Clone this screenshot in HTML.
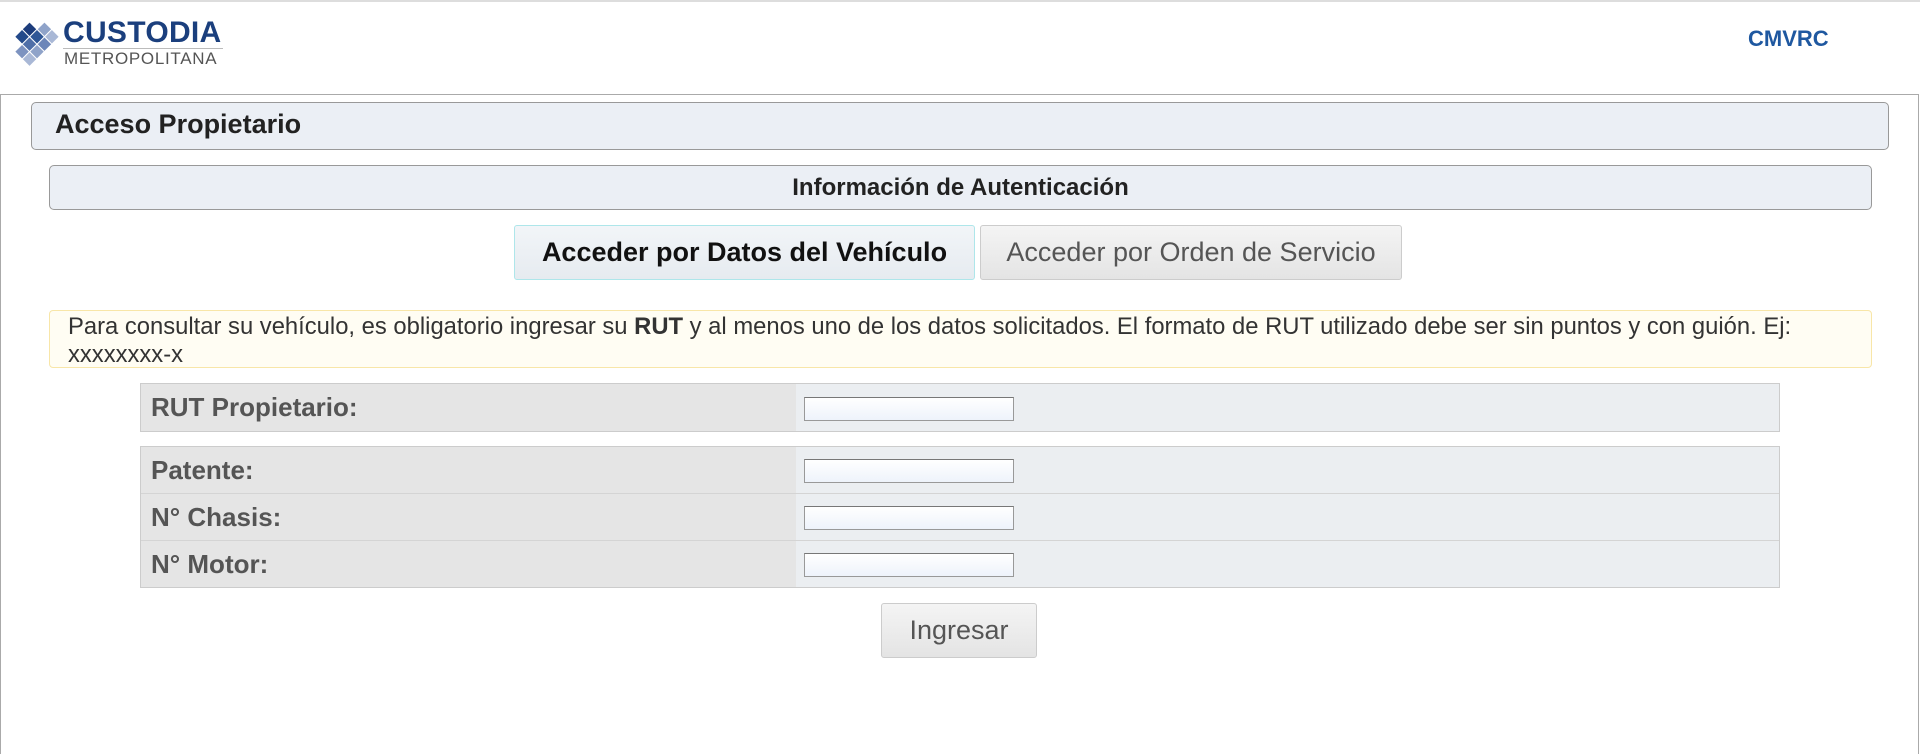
<!DOCTYPE html>
<html><head><meta charset="utf-8"><style>
*{box-sizing:border-box;margin:0;padding:0}
body{width:1920px;height:732px;background:#fff;font-family:"Liberation Sans",Arial,sans-serif;position:relative;overflow:hidden}
.a{position:absolute}
.topline{left:0;top:0;width:1920px;height:2px;background:#ddd}
.outer{left:0;top:94px;width:1919px;height:660px;border:1px solid #aaa;border-bottom:none}
.panel{background:#ebeff5;border:1px solid #999;border-radius:5px}
.tab{border:1px solid #ccc;border-radius:3px;background:linear-gradient(#f4f4f4,#e4e4e4);font-size:27px;text-align:center;line-height:52px;white-space:nowrap}
.lbl{background:#e5e5e5;color:#555;font-weight:bold;font-size:26px;padding-left:10px}
.inp{left:804px;width:210px;height:24px;border:1px solid #999;border-top-color:#777;background:linear-gradient(#fff,#eef3fb)}
</style></head><body>
<div class="a topline"></div>
<svg class="a" style="left:8px;top:15px" width="52" height="58" viewBox="0 0 40 55">
<g transform="rotate(45 20 27)">
<rect x="13" y="6" width="9" height="9" fill="#8fa3c9"/><rect x="23" y="6" width="9" height="9" fill="#a9b8d6"/>
<rect x="3" y="16" width="9" height="9" fill="#1d3d7c"/><rect x="13" y="16" width="9" height="9" fill="#2e5696"/><rect x="23" y="16" width="9" height="9" fill="#6c86b9"/>
<rect x="3" y="26" width="9" height="9" fill="#234a8a"/><rect x="13" y="26" width="9" height="9" fill="#4f6fa8"/><rect x="23" y="26" width="9" height="9" fill="#8fa3c9"/>
<rect x="13" y="36" width="9" height="9" fill="#7d93c0"/><rect x="23" y="36" width="9" height="9" fill="#a9b8d6"/>
</g></svg>
<div class="a" style="left:63px;top:16px;font-size:30px;font-weight:bold;color:#1b3f7d;letter-spacing:0.3px">CUSTODIA</div>
<div class="a" style="left:63px;top:48px;width:160px;height:1px;background:#bbb"></div>
<div class="a" style="left:64px;top:49px;font-size:17px;color:#555;letter-spacing:0.7px">METROPOLITANA</div>
<div class="a" style="left:1748px;top:26px;font-size:22px;font-weight:bold;color:#1f58a0">CMVRC</div>
<div class="a outer"></div>
<div class="a panel" style="left:31px;top:102px;width:1858px;height:48px"></div>
<div class="a" style="left:55px;top:109px;font-size:27px;font-weight:bold;color:#222">Acceso Propietario</div>
<div class="a panel" style="left:49px;top:165px;width:1823px;height:45px;text-align:center;font-weight:bold;font-size:24px;line-height:43px;color:#222">Información de Autenticación</div>
<div class="a tab" style="left:514px;top:225px;width:461px;height:55px;border-color:#aee6ea;background:linear-gradient(#f2f5f8,#e6ebf0);font-weight:bold;color:#111">Acceder por Datos del Vehículo</div>
<div class="a tab" style="left:980px;top:225px;width:422px;height:55px;color:#555">Acceder por Orden de Servicio</div>
<div class="a" style="left:49px;top:310px;width:1823px;height:58px;border:1px solid #f8e6a8;border-radius:4px;background:#fffdf3;font-size:23.8px;color:#333;line-height:28px;padding:2px 0 0 18px;white-space:nowrap">Para consultar su vehículo, es obligatorio ingresar su <b>RUT</b> y al menos uno de los datos solicitados. El formato de RUT utilizado debe ser sin puntos y con guión. Ej:<br>xxxxxxxx-x</div>
<div class="a" style="left:140px;top:383px;width:1640px;height:49px;border:1px solid #ccc;background:#ebeef1"></div>
<div class="a lbl" style="left:141px;top:384px;width:655px;height:47px;line-height:47px">RUT Propietario:</div>
<div class="a inp" style="top:397px"></div>
<div class="a" style="left:140px;top:446px;width:1640px;height:142px;border:1px solid #ccc;background:#ebeef1"></div>
<div class="a lbl" style="left:141px;top:447px;width:655px;height:46px;line-height:46px">Patente:</div>
<div class="a lbl" style="left:141px;top:494px;width:655px;height:46px;line-height:46px">N° Chasis:</div>
<div class="a lbl" style="left:141px;top:541px;width:655px;height:46px;line-height:46px">N° Motor:</div>
<div class="a" style="left:141px;top:493px;width:1638px;height:1px;background:#d4d4d4"></div>
<div class="a" style="left:141px;top:540px;width:1638px;height:1px;background:#d4d4d4"></div>
<div class="a inp" style="top:459px"></div>
<div class="a inp" style="top:506px"></div>
<div class="a inp" style="top:553px"></div>
<div class="a tab" style="left:881px;top:603px;width:156px;height:55px;color:#555">Ingresar</div>
</body></html>
